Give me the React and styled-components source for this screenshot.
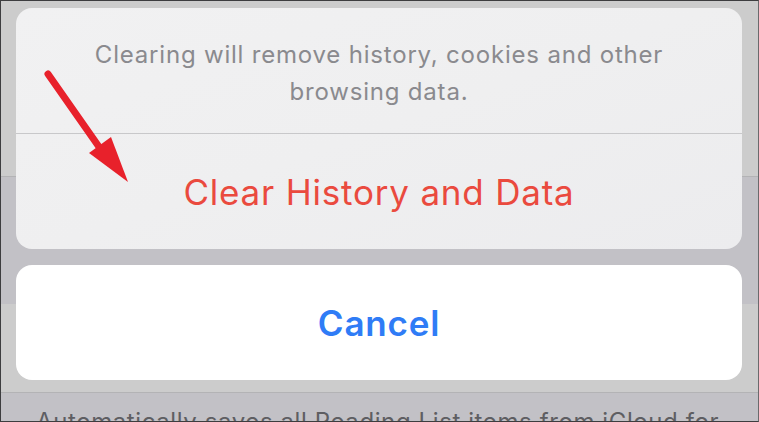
import React from "react";
import styled, { createGlobalStyle } from "styled-components";

const Global = createGlobalStyle`
  html, body { margin: 0; padding: 0; background: #cbcbcb; }
  body { font-family: Inter, "Noto Sans", "Liberation Sans", sans-serif; -webkit-font-smoothing: antialiased; }
`;

const Frame = styled.div`
  position: relative;
  width: 759px;
  height: 422px;
  box-sizing: border-box;
  border: 1px solid #3d3d3f;
  border-right-color: #6a6a6c;
  overflow: hidden;
  display: flex;
  flex-direction: column;
  background: #cbcbcb;
`;

const Band = styled.div`
  flex: 0 0 ${(p) => p.$h}px;
  background: ${(p) => (p.$dark ? "#c2c1c6" : "#cccccc")};
  border-bottom: ${(p) => (p.$line ? "1px solid #b3b3b5" : "none")};
  box-sizing: border-box;
  display: flex;
  align-items: ${(p) => (p.$align === "end" ? "flex-end" : "flex-start")};
  padding-left: 35px;
`;

const Header = styled.div`
  font-size: 20px;
  letter-spacing: 1.5px;
  color: #6b6b70;
  line-height: 20px;
  margin-bottom: -5px;
`;

const Footer = styled.div`
  font-size: 24px;
  letter-spacing: 0.6px;
  color: #5e5e62;
  line-height: 24px;
  padding-top: 17px;
  white-space: nowrap;
`;

const Sheet = styled.div`
  position: absolute;
  left: 15px;
  top: 7px;
  width: 726px;
  display: flex;
  flex-direction: column;
  gap: 16px;
`;

const Card = styled.div`
  border-radius: 16px;
  background: ${(p) => (p.$white ? "#ffffff" : "linear-gradient(160deg, #f1f1f2 0%, #efeff0 50%, #ececee 100%)")};
  display: flex;
  flex-direction: column;
  overflow: hidden;
`;

const Message = styled.div`
  height: 126px;
  box-sizing: border-box;
  padding-top: 5px;
  display: flex;
  align-items: center;
  justify-content: center;
  text-align: center;
  font-size: 24px;
  letter-spacing: 0.8px;
  line-height: 37px;
  color: #8a8a8e;
  border-bottom: 1px solid #c8c8ca;
`;

const Action = styled.div`
  height: 115px;
  display: flex;
  align-items: center;
  justify-content: center;
  font-size: 35px;
  font-weight: ${(p) => (p.$bold ? 600 : 400)};
  color: ${(p) => (p.$blue ? "#2f7cf6" : "#ea4a3e")};
  letter-spacing: 0.8px;
`;

const Arrow = styled.svg`
  position: absolute;
  left: 0;
  top: 0;
  pointer-events: none;
`;

export default function App() {
  return (
    <>
      <Global />
      <Frame>
        <Band $h={176} $line />
        <Band $h={127} $dark $align="end">
          <Header>READING LIST</Header>
        </Band>
        <Band $h={89} $line />
        <Band $h={30} $dark>
          <Footer>Automatically saves all Reading List items from iCloud for</Footer>
        </Band>
        <Sheet>
          <Card>
            <Message>
              Clearing will remove history, cookies and other
              <br />
              browsing data.
            </Message>
            <Action>Clear History and Data</Action>
          </Card>
          <Card $white>
            <Action $blue $bold>Cancel</Action>
          </Card>
        </Sheet>
        <Arrow width="759" height="422" viewBox="0 0 759 422">
          <line x1="47" y1="73" x2="110" y2="163" stroke="#e8212b" strokeWidth="7" strokeLinecap="round" />
          <polygon points="127,181 88,152 110,136" fill="#e8212b" />
        </Arrow>
      </Frame>
    </>
  );
}
